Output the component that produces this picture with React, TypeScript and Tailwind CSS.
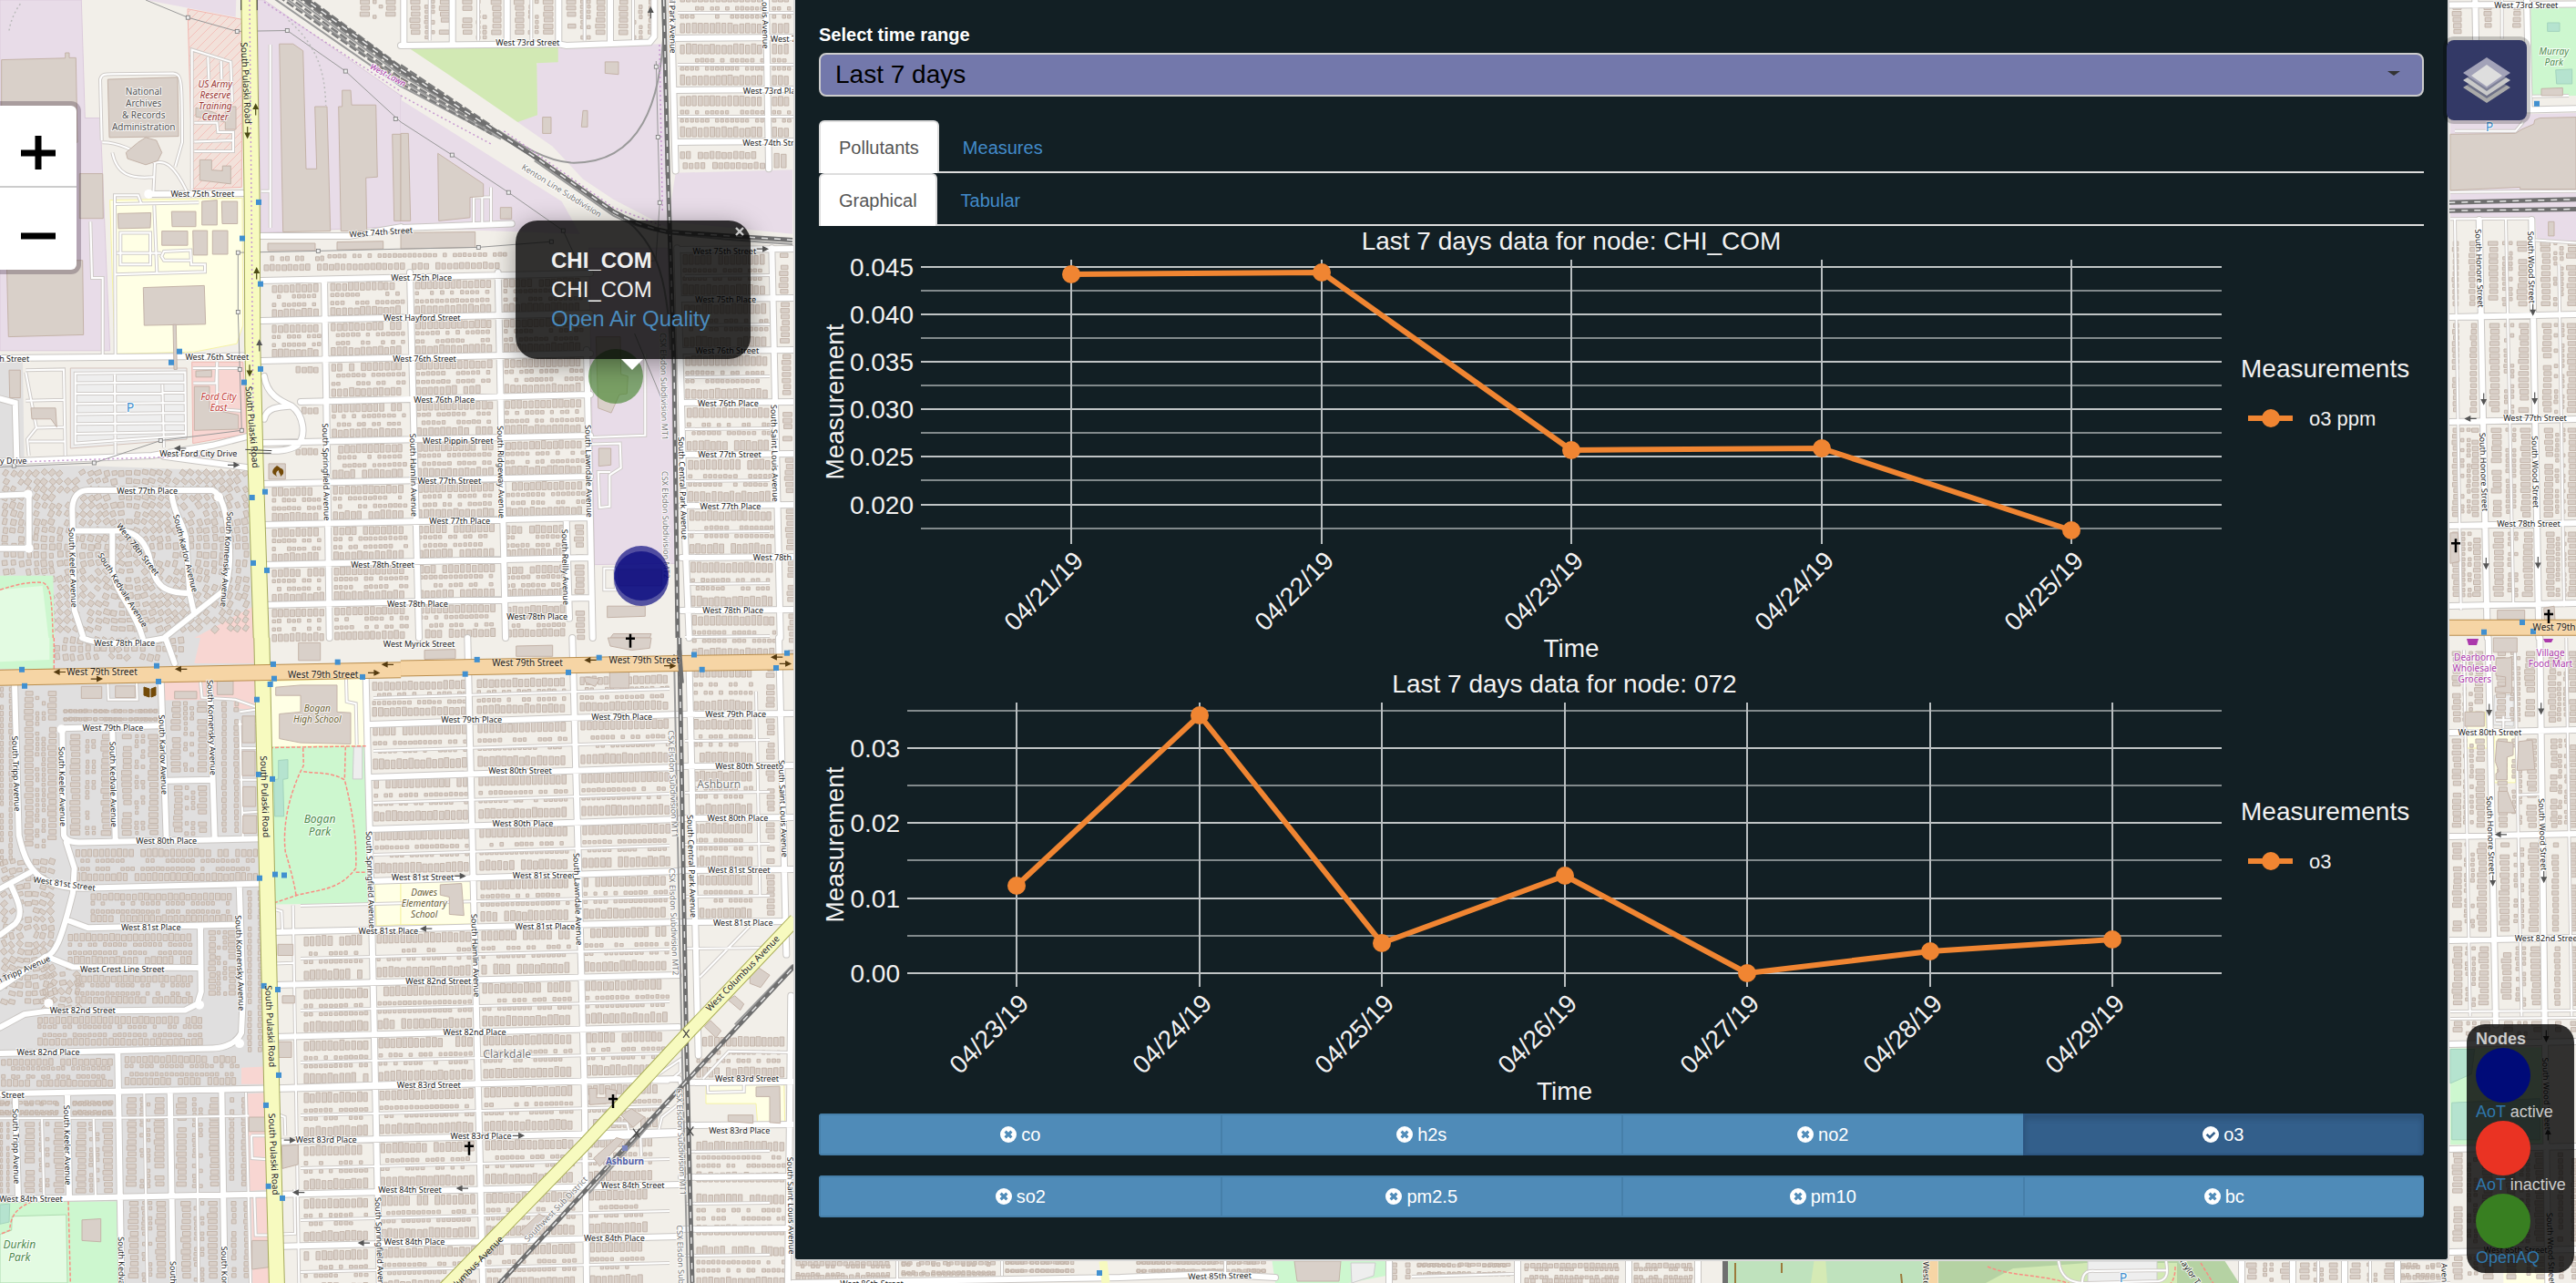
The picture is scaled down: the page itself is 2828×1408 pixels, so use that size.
import React, { useState } from "react";

/* ---------- map geometry helpers ---------- */

type Tile = { x: number; y: number; sx: number; sy: number };

// Map sheets: origin on the page and units per pixel on each axis.
const A: Tile = { x: 0, y: 0, sx: 3, sy: 2.24 };
const B: Tile = { x: 440, y: 0, sx: 3, sy: 2.24 };
const C: Tile = { x: 0, y: 700, sx: 3, sy: 2.215 };
const D: Tile = { x: 440, y: 700, sx: 3, sy: 2.215 };
const E: Tile = { x: 2380, y: 0, sx: 3, sy: 2.24 };
const F: Tile = { x: 2380, y: 700, sx: 3, sy: 2.215 };
const P: Tile = { x: 0, y: 0, sx: 1, sy: 1 };

const tx = (t: Tile, x: number) => Math.round((t.x + x / t.sx) * 10) / 10;
const ty = (t: Tile, y: number) => Math.round((t.y + y / t.sy) * 10) / 10;

const path = (t: Tile, d: string) =>
  d.replace(/(-?\d+),(-?\d+)/g, (_, x, y) => `${tx(t, +x)},${ty(t, +y)}`);

let seed = 7;
const rnd = () => {
  seed = (seed * 16807) % 2147483647;
  return seed / 2147483647;
};

const rect = (x: number, y: number, w: number, h: number) =>
  `M${x.toFixed(1)},${y.toFixed(1)}h${w.toFixed(1)}v${h.toFixed(1)}h${(-w).toFixed(1)}z`;

// A line of lots running west to east; slope follows the street grid.
function rowH(x0: number, x1: number, y: number, h: number, w: number, fill: number, slope: number) {
  let d = "";
  for (let x = x0; x + w <= x1; x += w + 1.5) {
    if (rnd() > fill) continue;
    const j = rnd() * h * 0.2;
    d += rect(x, y + (x - x0) * slope + j, w - rnd() * 0.8, h - j);
  }
  return d;
}

function rowV(x: number, y0: number, y1: number, w: number, h: number, fill: number) {
  let d = "";
  for (let y = y0; y + h <= y1; y += h + 1.6) {
    if (rnd() > fill) continue;
    const j = rnd() * w * 0.25;
    d += rect(x + j, y, w - j, h - rnd() * 0.8);
  }
  return d;
}

function blockH(x0: number, y0: number, x1: number, y1: number, slope = 0) {
  const H = y1 - y0;
  const big = Math.min(11, H * 0.25);
  const m = (y0 + y1) / 2;
  return (
    rowH(x0, x1, y0, big, 5, 0.96, slope) +
    rowH(x0, x1, m - 6.5, 4, 4, 0.75, slope) +
    rowH(x0, x1, m + 2.5, 4, 4, 0.75, slope) +
    rowH(x0, x1, y1 - big, big, 5, 0.97, slope)
  );
}

function blockV(x0: number, y0: number, x1: number, y1: number) {
  const W = x1 - x0;
  const big = Math.min(11, W * 0.27);
  const m = (x0 + x1) / 2;
  return (
    rowV(x0, y0, y1, big, 5, 0.95) +
    (W > 28 ? rowV(m - 5.5, y0, y1, 4, 4, 0.7) + rowV(m + 1.5, y0, y1, 4, 4, 0.7) : "") +
    rowV(x1 - big, y0, y1, big, 5, 0.95)
  );
}

function scatter(x0: number, y0: number, x1: number, y1: number) {
  let d = "";
  for (let y = y0; y < y1; y += 9)
    for (let x = x0; x < x1; x += 8.5) {
      if (rnd() < 0.12) continue;
      const cx = x + rnd() * 2;
      const cy = y + rnd() * 2;
      const a = Math.atan2(cy - (y0 + y1) / 2, cx - (x0 + x1) / 2);
      const w = 2 + rnd() * 1.1;
      const h = 2.6 + rnd();
      const c = Math.cos(a);
      const s = Math.sin(a);
      const pt = (u: number, v: number) => `${(cx + u * c - v * s).toFixed(1)},${(cy + u * s + v * c).toFixed(1)}`;
      d += `M${pt(-w, -h)}L${pt(w, -h)}L${pt(w, h)}L${pt(-w, h)}z`;
    }
  return d;
}

/* ---------- map data ---------- */

const areas: [Tile, string, string, string?][] = [
  [A, "M0,0L268,0L280,290L330,290L362,862L0,862z", "#e8dce8", "#dccbdc"],
  [A, "M480,0L778,0L776,42L660,25z", "#e8dce8"],
  [A, "M848,0L870,0L1320,235L1320,556L860,572z", "#e8dce8", "#dccbdc"],
  [B, "M0,245L530,495L590,575L0,560z", "#e8dce8"],
  [B, "M518,112L868,108L880,560L700,490L600,440L500,360L385,300L450,155z", "#e8dce8"],
  [B, "M905,425L1290,417L1290,575L880,545z", "#e8dce8"],
  [B, "M620,610L880,610L905,1385L638,1388z", "#e8dce8", "#dccbdc"],
  [B, "M20,115L518,112L518,153L448,155L450,283L385,300L170,190z", "#d2e9b4"],
  [A, "M618,22L798,48L796,460L635,465z", "#f2e1da", "#f3b6b0"],
  [A, "M362,492L798,487L800,800L780,845L640,865L378,870z", "#ffffe5", "#f6f3a5"],
  [A, "M632,890L800,890L812,1050L825,1065L635,1090z", "#f8d6d2", "#efb9b3"],
  [A, "M232,905L615,905L615,1080L232,1102z", "#eeeeee", "#d5c3bb"],
  [A, "M0,890L75,890L80,1145L300,1145L830,1160L850,1568L0,1568z", "#e0dfdf"],
  [C, "M0,0L850,0L900,1568L0,1568z", "#e0dfdf"],
  [C, "M660,0L850,0L850,62L640,62z", "#f8d6d2"],
  [A, "M835,1490L840,1568L640,1568z", "#f8d6d2"],
  [C, "M540,102L855,100L858,180L770,170L770,150L540,152z", "#f8d6d2"],
  [C, "M795,1045L872,1042L874,1085L795,1085z", "#f8d6d2"],
  [C, "M815,1108L885,1105L892,1340L822,1345z", "#f8d6d2"],
  [C, "M828,1357L890,1357L890,1568L832,1568z", "#f8d6d2"],
  [C, "M890,105L1205,98L1205,262L892,265z", "#ffffe5", "#f6f3a5"],
  [C, "M890,265L1205,262L1212,645L900,648z", "#cdf7cf"],
  [C, "M917,298L948,296L948,342L932,344L935,434L905,434L902,345L917,343z", "#b5e3cf", "#a3d3bd"],
  [C, "M1165,265L1193,265L1193,343L1162,343z", "#eeeeee", "#cccccc"],
  [C, "M1235,592L1320,590L1320,697L1240,700z", "#ffffe5", "#f6f3a5"],
  [D, "M0,590L232,588L232,696L0,697z", "#ffffe5", "#f6f3a5"],
  [D, "M1005,1085L1262,1082L1265,1185L1175,1183L1170,1132L1005,1132z", "#ffffe5", "#f6f3a5"],
  [E, "M1195,15L1344,15L1344,235L1197,237z", "#cdf7cf"],
  [E, "M1250,56L1290,56L1290,77L1250,77zM1277,172L1331,170L1331,206L1280,206z", "#b5e3cf", "#a3d3bd"],
  [E, "M930,285L1344,278L1344,600L1215,585L1210,540L930,540z", "#e8dce8"],
  [F, "M1075,237L1145,235L1145,352L1072,352z", "#ffffe5", "#f6f3a5"],
  [F, "M978,180L1045,180L1052,268L980,268z", "#ffffe5", "#f6f3a5"],
  [F, "M1075,140L1138,138L1138,215L1072,212z", "#eeeeee", "#cccccc"],
  [F, "M1105,1500L1245,1500L1245,1568L1105,1568z", "#ffffe5"],
];

// Parks sit above the lots so that their lawns stay clear.
const parks: [Tile, string, string, string?][] = [
  [A, "M0,1415L175,1415L180,1568L0,1568z", "#cdf7cf"],
  [C, "M0,0L178,0L178,75L0,75z", "#cdf7cf"],
  [A, "M0,1450L140,1440L160,1568L0,1568z", "#e3fbe2"],
  [C, "M0,0L163,0L163,53L0,58z", "#e3fbe2"],
  [C, "M0,1372L385,1370L390,1568L0,1568z", "#cdf7cf"],
  [C, "M40,1406L218,1402L222,1568L0,1568L0,1450L38,1440z", "#e3fbe2", "#aedcb0"],
  [C, "M0,1378L32,1376L30,1420L0,1425z", "#b5e3cf", "#a3d3bd"],
  [F, "M930,998L1240,995L1240,1230L930,1232z", "#cdf7cf"],
  [F, "M930,1000L1010,1000L1000,1060L930,1083zM935,1130L1225,1120L1225,1220L935,1220z", "#b5e3cf", "#a3d3bd"],
  [P, "M1396,1380L1522,1380L1522,1400L1480,1408L1400,1408z", "#cdf7cf"],
  [P, "M1483,1386L1510,1386L1508,1400L1484,1408z", "#eeeeee", "#cccccc"],
  [P, "M1896,1380L2112,1380L2112,1408L1896,1408z", "#bfe2bd"],
  [P, "M1992,1380L2004,1380L2006,1408L1988,1408z", "#d5eab5"],
  [P, "M2128,1380L2440,1380L2458,1408L2128,1408z", "#b5d2a3"],
  [P, "M2180,1408L2210,1392L2290,1386L2390,1386L2390,1408z", "#d2e9b4"],
  [P, "M2292,1384L2368,1384L2368,1412L2292,1415z", "#eeeeee", "#cccccc"],
];

const buildings: [Tile, string][] = [
  [A, "M5,147L215,143L215,130L228,130L228,142L250,142L255,350L5,350zM22,640L272,640L275,823L28,828zM262,427L338,427L340,537L262,537z"],
  [A, "M355,195L585,190L588,335L360,338zM415,375L455,350L480,338L515,345L533,375L520,395L480,405L420,390z"],
  [A, "M472,707L673,702L677,797L475,800zM388,525L497,523L495,560L390,562zM565,520L645,520L645,557L567,557zM665,495L715,492L715,553L665,553zM730,495L782,495L782,550L732,550zM533,568L618,568L618,603L533,603zM635,567L683,567L683,627L637,627zM700,567L750,567L750,625L700,625z"],
  [A, "M658,393L697,393L697,418L733,420L733,408L760,408L760,452L658,443zM645,265L700,275L742,290L745,262L777,262L777,318L742,318L742,300L645,287z"],
  [A, "M640,950L690,950L690,1005L785,1020L785,1055L640,1058zM645,912L697,910L697,927L645,927z"],
  [A, "M920,108L965,108L998,125L1008,415L1043,415L1037,262L1077,262L1088,568L932,570zM1127,222L1155,222L1158,258L1238,258L1243,435L1205,437L1208,568L1123,568L1115,262L1127,262zM1292,330L1320,330L1320,543L1298,543z"],
  [A, "M882,598L1038,598L1038,616L882,616zM1110,595L1262,593L1262,612L1110,614zM30,910L67,910L67,978L32,978zM102,1003L183,1003L187,1050L168,1030L105,1030zM885,1140L940,1140L940,1178L885,1178z"],
  [A, "M570,798L580,798L583,908L573,908z"],
  [B, "M0,328L25,328L32,543L0,543zM122,377L272,452L272,483L228,485L228,535L125,543zM467,288L495,288L495,328L467,328zM673,152L717,152L717,183L673,180zM328,510L365,510L365,538L328,538zM600,272L615,272L615,312L595,312z"],
  [B, "M0,572L245,570L245,608L0,612z"],
  [B, "M643,828L723,828L725,920L748,925L745,968L720,970L693,1015L650,1003zM652,1102L692,1102L692,1143L652,1146zM680,1490L805,1490L805,1515L680,1518zM715,1400L860,1400L860,1440L720,1440z"],
  [B, "M690,1568L700,1558L825,1558L820,1568z"],
  [C, "M908,120L990,115L1110,115L1110,180L1155,182L1155,258L990,255L920,245L920,185L990,180L990,140L908,140z"],
  [C, "M268,118L335,118L335,147L268,147zM380,117L445,117L445,145L380,145zM575,130L648,130L648,148L575,148zM715,105L768,105L768,138L715,138zM983,12L1055,12L1055,55L983,55z"],
  [C, "M798,190L840,190L840,255L798,255zM798,275L840,275L840,335L798,335zM800,362L842,362L842,410L800,410zM800,432L845,432L845,475L800,475z"],
  [C, "M915,745L965,745L965,772L915,772zM930,870L970,870L970,888L930,888zM915,982L960,982L960,1020L915,1020zM928,1235L982,1232L982,1280L930,1290zM820,1165L875,1165L875,1200L820,1200zM830,1465L885,1465L885,1530L830,1535z"],
  [C, "M270,1415L332,1412L332,1468L270,1465z"],
  [D, "M130,600L200,597L208,675L160,672L160,630L130,625z"],
  [D, "M682,0L825,0L820,25L760,30L690,20zM605,95L655,100L640,118L608,108zM688,82L752,82L752,122L688,122zM78,30L180,28L180,50L78,52zM380,20L500,18L500,45L380,45z"],
  [D, "M620,1095L645,1095L645,1118L675,1118L675,1095L710,1100L708,1130L622,1135zM725,1160L760,1145L803,1165L765,1190zM635,1265L710,1215L735,1220L655,1285zM390,1445L455,1400L480,1410L410,1455z"],
  [D, "M1170,1092L1248,1090L1250,1180L1215,1178L1215,1115L1170,1115zM1078,1160L1160,1160L1160,1180L1078,1175zM1150,815L1175,800L1215,820L1185,850L1150,840zM1078,880L1100,870L1130,890L1118,905zM1000,945L1020,930L1055,955L1038,972z"],
  [E, "M1208,295L1225,290L1344,288L1344,465L1160,465L1160,460L930,468L930,330L1145,328L1165,318L1205,305z"],
  [E, "M1230,218L1300,216L1300,235L1230,235zM1253,545L1272,545L1272,580L1253,580zM930,1310L955,1310L960,1380L930,1385zM1238,1495L1272,1490L1275,1525L1240,1525zM1085,1500L1175,1500L1175,1523L1085,1523z"],
  [F, "M1072,0L1150,0L1150,35L1072,35zM978,180L1042,180L1042,215L978,215zM1080,50L1133,48L1133,135L1078,132L1078,120L1112,118L1112,95L1080,92z"],
  [F, "M1083,250L1137,255L1137,285L1117,290L1117,345L1080,345L1080,330L1090,325L1078,300zM1155,252L1200,248L1208,320L1150,322zM1088,373L1118,373L1145,425L1088,425z"],
  [P, "M1421,1384L1472,1384L1470,1406L1424,1406z"],
];

function buildHouses() {
  let d = "";
  // Grid between 75th Place and Myrick Street
  const rows = [308, 352, 396, 441, 486, 531, 576, 620, 664, 708];
  for (let i = 0; i < rows.length - 1; i++) {
    const s = (rows[i] - 300) * 0.0128;
    const cols = [293, 357 + s, 450 + s, 547 + s, 645 + s];
    for (let c = 0; c < 4; c++) {
      if (c === 0 && (i === 2 || i === 3 || i === 4)) {
        d += rowH(325, cols[1] - 4, rows[i] + 6, 7, 5, 0.9, 0);
        continue;
      }
      if (c === 3 && i > 5) {
        d += blockH(cols[c] + 5, rows[i] + 1, cols[c + 1] - 26, rows[i + 1] - 9, -0.02);
        d += rowV(cols[c + 1] - 18, rows[i], rows[i + 1] - 3, 10, 5, 0.9);
        continue;
      }
      d += blockH(cols[c] + 6, rows[i] + 4 - c * 2, cols[c + 1] - 5, rows[i + 1] - 4 - c * 2, -0.02);
    }
  }
  d += rowH(297, 360, 281, 5, 4, 0.8, 0) + rowH(290, 550, 290, 7, 5, 0.95, -0.01);
  d += rowH(360, 560, 279, 4, 4, 0.8, -0.01);
  // Blocks north of 73rd Street
  for (let i = 0; i < 5; i++) d += blockV(450 + i * 57, 0, 493 + i * 57, 44);
  d += blockV(395, 0, 434, 22);
  // Between the railway and the panel
  const east = [-15, 42, 99, 156, 190];
  for (let i = 0; i < 3; i++) {
    d += blockH(747, east[i] + 6, 839, east[i + 1] - 6);
    d += blockH(848, east[i] + 6, 872, east[i + 1] - 6);
  }
  d += rowH(747, 842, 166, 8, 5, 0.9, 0) + rowH(750, 842, 178, 7, 5, 0.95, 0) + rowH(850, 872, 166, 18, 6, 0.9, 0);
  const east2 = [274, 328, 385, 442, 499, 555, 612, 670, 727, 784, 841, 898, 955, 1012];
  for (let i = 0; i < east2.length - 1; i++) {
    const s = (east2[i] - 274) * 0.026;
    if (east2[i] > 700) d += blockH(762, east2[i] + 5, 828, east2[i + 1] - 5) + rowV(841, east2[i] + 5, east2[i + 1] - 5, 9, 5, 0.9);
    else {
      d += blockH(750 + s, east2[i] + 5, 845 + s, east2[i + 1] - 5);
      d += rowV(855 + s, east2[i] + 4, east2[i + 1] - 4, 10, 5, 0.9);
    }
  }
  [1131, 1246, 1304, 1361].forEach((y) => (d += blockH(765, y + 6, 866, y + 51)));
  // Grid south of 79th Street
  const south = [740, 788, 846, 903, 960, 1016, 1074, 1131, 1188, 1246, 1304, 1361, 1418];
  for (let i = 0; i < south.length - 1; i++) {
    const y = south[i];
    const s = (y - 740) * 0.018;
    const cols = [328, 403 + s, 518 + s, 631 + s, 741];
    for (let c = 0; c < 4; c++) {
      const off = (2 - c) * 3;
      if (c === 0 && y < 1000) continue;
      if (c === 1 && y === 960) continue;
      const right = c === 3 && y > 1100 ? Math.max(cols[3] + 10, 741 - (y - 1100) * 0.1) : cols[c + 1];
      d += blockH(cols[c] + 6, y + 5 + off, right - 5, south[i + 1] - 5 + off, -0.02);
    }
  }
  // Curved streets west of Pulaski
  d += scatter(5, 518, 275, 690) + scatter(62, 702, 200, 722);
  d += scatter(4, 945, 60, 1100) + scatter(50, 1060, 90, 1110);
  const cb = (x0: number, y0: number, x1: number, y1: number, v = true) =>
    (d += (v ? blockV : blockH)(tx(C, x0), ty(C, y0), tx(C, x1), ty(C, y1)));
  cb(0, 120, 40, 560);
  cb(80, 130, 185, 520);
  cb(230, 235, 365, 488);
  cb(400, 235, 520, 488);
  cb(562, 155, 680, 335);
  cb(570, 360, 680, 485);
  cb(730, 155, 785, 485);
  cb(210, 175, 520, 200, false);
  cb(250, 512, 855, 590, false);
  cb(300, 620, 770, 690, false);
  cb(225, 718, 640, 792, false);
  cb(250, 820, 640, 888, false);
  cb(685, 712, 775, 880);
  cb(815, 615, 862, 1020);
  cb(125, 920, 680, 990, false);
  cb(5, 1022, 372, 1090, false);
  cb(412, 1015, 790, 1086, false);
  cb(0, 1125, 205, 1160, false);
  cb(240, 1125, 372, 1160, false);
  cb(0, 1178, 30, 1350);
  cb(80, 1178, 210, 1350);
  cb(250, 1178, 370, 1350);
  cb(415, 1118, 540, 1345);
  cb(580, 1118, 720, 1345);
  cb(755, 1118, 810, 1345);
  cb(422, 1370, 545, 1568);
  cb(595, 1370, 715, 1568);
  cb(762, 1370, 818, 1568);
  // Strip east of the panel
  const st = [[262, 343], [352, 458], [467, 572], [581, 661], [712, 798], [808, 912], [922, 1027], [1036, 1110], [1118, 1140], [1262, 1368], [1376, 1408]];
  st.forEach(([a, b]) => {
    const s = Math.min(20, (a - 262) * 0.019);
    d += blockV(2692, a + 3, 2717 + s, b - 3) + blockV(2731 + s, a + 3, 2774 + s, b - 3) + blockV(2789 + s, a + 3, 2828, b - 3);
  });
  d += rowV(2692, 6, 40, 10, 5, 0.9) + rowV(2726, 6, 33, 9, 5, 0.9) + rowV(2758, 6, 33, 9, 5, 0.9);
  // Strip south of the panel
  d += blockH(874, 1384, 978, 1404) + blockH(990, 1384, 1095, 1400) + blockH(1104, 1384, 1180, 1396) + blockH(1248, 1384, 1390, 1396);
  d += blockV(1528, 1386, 1548, 1408) + blockH(1556, 1386, 1660, 1400) + blockH(1674, 1386, 1780, 1408) + blockH(1794, 1386, 1860, 1408);
  d += blockV(2466, 1386, 2514, 1408) + blockV(2524, 1386, 2566, 1408) + blockV(2580, 1386, 2628, 1408) + blockH(2636, 1386, 2680, 1404);
  return d;
}
const houses = buildHouses();

function buildRoads() {
  const wide: string[] = [];
  const thin: string[] = [];
  [308, 352, 396, 441, 486, 531, 576, 620, 664].forEach((y, i) => wide.push(`M${i === 3 ? 330 : 287},${y}L648,${y - 8}`));
  [788, 846, 903, 960, 1016, 1074, 1131, 1188, 1246, 1304, 1361, 1418].forEach((y) => {
    wide.push(`M${y < 1000 ? 406 : 300},${y + 7}L745,${y - 4}`);
    thin.push(`M${y < 1000 ? 410 : 330},${y - 22}L735,${y - 32}`);
  });
  [42, 99, 156].forEach((y) => wide.push(`M742,${y}L872,${y - 1}`));
  [14, 71, 128].forEach((y) => thin.push(`M744,${y}L872,${y}`));
  [274, 328, 385, 442, 499, 555, 612, 670, 784, 841, 898, 955, 1012, 1188, 1235, 1292, 1349].forEach((y) => {
    wide.push(`M748,${y}L872,${y - 1}`);
    if (y !== 1188) thin.push(`M752,${y + 29}L845,${y + 28}`);
  });
  [347, 462, 576, 664, 803, 917, 1031, 1145, 1260, 1373].forEach((y) => wide.push(`M2690,${y + 1}L2828,${y - 2}`));
  [1110, 1118].forEach((y) => thin.push(`M2690,${y}L2828,${y - 1}`));
  const w = (t: Tile, d: string) => wide.push(path(t, d));
  const n = (t: Tile, d: string) => thin.push(path(t, d));
  w(A, "M860,580L1150,580L1320,558");
  w(B, "M0,560L365,550");
  w(A, "M490,477L800,475");
  w(A, "M0,880L800,875");
  w(A, "M0,1135L500,1120L700,1095L830,1070");
  w(A, "M540,1122L840,1152");
  w(A, "M870,925C880,970 920,985 960,998C1000,1020 1010,1070 980,1095C940,1112 900,1108 870,1108");
  w(A, "M870,1030C880,1000 920,1000 960,998");
  w(A, "M1068,690L1075,990L1085,1568");
  w(B, "M30,670L60,1568");
  w(B, "M320,670L345,1568");
  w(B, "M612,860L632,1568");
  w(B, "M545,1280L555,1520");
  w(B, "M890,0L905,420");
  w(B, "M1203,0L1212,415");
  w(B, "M910,610L935,1300L950,1568");
  w(B, "M1222,610L1250,1568");
  w(B, "M0,112L520,108L545,112L820,104L835,90L835,0");
  [10, 170, 350, 520, 690].forEach((x) => w(B, `M${x},0L${x},105`));
  [95, 255, 430, 605, 765].forEach((x) => n(B, `M${x},0L${x},100`));
  w(C, "M1205,100L1225,700L1250,1568");
  w(D, "M220,0L270,1568");
  w(D, "M565,0L605,1100L612,1568");
  w(D, "M950,80L980,1015");
  w(D, "M1245,0L1270,770");
  w(D, "M1285,870L1275,1568");
  n(D, "M985,825L1150,700");
  n(D, "M995,1072L1080,1005L1290,1008");
  n(D, "M1170,130L1183,625");
  w(A, "M0,980L50,990L55,1125");
  w(A, "M0,1218L95,1215L95,1348L0,1348");
  w(A, "M275,1568L245,1500L238,1250C240,1220 260,1205 290,1205L700,1205C730,1215 745,1260 750,1300C760,1360 760,1400 740,1450L540,1568");
  w(A, "M240,1305L400,1305C460,1310 485,1340 495,1380C510,1440 540,1458 625,1458");
  w(A, "M370,1310L370,1400C380,1460 440,1490 470,1568");
  w(A, "M565,1210C570,1260 600,1280 612,1320L625,1460L640,1510");
  w(C, "M270,0C330,20 460,15 545,0L575,62");
  w(C, "M48,110L62,480C80,540 100,560 130,580C180,605 230,610 300,608L870,597");
  w(C, "M205,222L210,480C215,492 230,497 260,497L865,488");
  w(C, "M205,220L525,213");
  w(C, "M530,105L548,490");
  w(C, "M370,225L380,492");
  w(C, "M690,105L707,487");
  w(C, "M550,347L700,345");
  w(C, "M218,497L245,560L240,620C200,740 180,770 150,775L0,850");
  w(C, "M218,685L290,705L780,697");
  w(C, "M155,775L240,800L655,802");
  w(C, "M660,705L662,860L650,890L610,905L150,908L80,915L0,947");
  w(C, "M788,600L800,880L795,960C780,985 740,997 700,998L0,1010");
  w(C, "M0,610L100,570M35,600C60,640 80,670 50,695L0,722");
  w(C, "M0,1108L890,1095L1320,1085");
  w(C, "M0,1365L900,1352");
  w(C, "M50,1112L60,1360M222,1112L228,1360");
  w(C, "M388,1010L400,1568");
  w(C, "M560,1100L570,1568");
  w(C, "M730,1100L740,1568");
  n(C, "M0,1168L470,1166L820,1162M138,1168L145,1360M308,1168L315,1358M475,1105L485,1568M648,1165L655,1568M810,1105L825,1568");
  n(C, "M790,180L860,172M785,210L858,208M788,268L858,268M790,345L865,345M795,425L862,422M790,200L800,485");
  n(C, "M965,650L985,1568");
  n(C, "M355,108L357,150L452,150L450,108M660,105L665,145L775,150L860,172");
  n(A, "M335,345L330,195C335,182 345,182 370,182L570,180C600,182 600,200 600,350L577,410M337,350C400,350 450,375 510,400L505,478M510,400C540,395 570,400 615,470");
  n(A, "M370,375C385,430 430,440 505,435");
  n(A, "M380,875L378,480L455,480L465,500M380,502L655,498M508,505L517,670M380,675L675,668L675,650L630,650L628,615L540,618L532,630L540,640L628,640M385,622L530,622M397,572L495,572L495,650L397,650z");
  n(A, "M632,465L632,122L760,152L765,250M685,140L688,195M728,150L730,195M640,302L715,302L718,325L768,325L768,372L640,372M640,348L768,345");
  n(A, "M298,545L303,683L338,683L338,875M890,110L890,560M860,470L888,470");
  n(A, "M85,910L210,908L215,1120M85,985L210,983M85,915L120,1052L90,1080L95,1120M120,1052L210,1050M95,1085L212,1085");
  n(A, "M635,905L790,905M637,942L712,942L715,890L715,1005L795,1010");
  n(A, "M248,918L610,915L612,1070L248,1090zM250,942L610,940M250,968L610,965M250,993L612,990M250,1018L612,1015M250,1042L612,1040M250,1066L612,1062M378,920L380,1120M535,945L540,1100");
  n(B, "M240,550L240,485L297,485L297,460M268,485L268,548M297,485L297,548");
  n(B, "M630,1075L805,1070L805,870M630,1092L722,1090L725,1150L688,1168L688,1245L655,1248L650,1160L690,1160M670,1397L705,1397L708,1450L670,1450z");
  n(C, "M1140,100L1142,155L1172,160L1175,260M905,660L928,665L930,710M905,792L965,790M920,1160L938,1165L940,1210M828,1210L885,1210M828,1210L830,1265L890,1268M925,1450L972,1448L970,1340M838,1357L842,1452L900,1452");
  n(D, "M820,1075L920,1025L920,1055L880,1080L830,1080M700,1180L745,1180L755,1210M850,1195L860,1165L920,1130M790,1215L792,1260M1010,1080L1012,1105L1130,1103L1130,1080");
  w(D, "M610,1215L920,1205");
  w(E, "M1025,540L1052,1568");
  w(E, "M1198,540L1222,1568");
  w(F, "M1055,0L1080,940");
  w(F, "M1225,0L1252,1568");
  w(E, "M930,12L1344,10");
  w(E, "M1012,0L1014,95");
  w(E, "M1182,0L1190,270L1344,267");
  n(E, "M1100,0L1100,95M945,322L1145,322L1170,300M1200,237L1320,235M1210,590L1344,597M930,472L1344,470M945,540L965,1500M1113,540L1138,1490M1288,650L1305,1490M930,538L1198,537");
  n(F, "M975,30L995,920M1143,30L1165,920M1312,0L1330,920M1150,382L1225,380M1105,190L1105,220M1080,200L1130,200");
  w(P, "M870,1408L1230,1402L1330,1398L1400,1402");
  n(P, "M985,1384L985,1404M1100,1384L1100,1400M1345,1384L1345,1400M1550,1401L1662,1398");
  w(P, "M1525,1384L1525,1408M1666,1384L1666,1408M1788,1384L1788,1408M1864,1384L1864,1408M2461,1384L2461,1408M2517,1384L2517,1408M2574,1384L2574,1408M2632,1384L2632,1408");
  n(P, "M2545,1384L2545,1408M2602,1384L2602,1408M2260,1384C2262,1400 2270,1408 2290,1408L2370,1406C2380,1404 2380,1396 2378,1384M2286,1408C2286,1398 2290,1394 2300,1395L2378,1394M2630,1410L2690,1408");
  return { wide: wide.join(""), thin: thin.join("") };
}
const roads = buildRoads();

const pulaski = path(A, "M820,-10L830,500L832,850L842,1150L860,1568") + path(C, "M862,0L880,600L895,1100L912,1580");
const columbus = path(D, "M145,1580L600,1235L940,965L1300,685");
const street79 = path(C, "M-10,97L1320,78") + path(D, "M0,74L920,62L1300,58") + path(E, "M925,1543L1350,1543");
const rails = [
  path(B, "M866,0L880,430L900,900L912,1568") + path(D, "M917,0L940,960L960,1568"),
  path(D, "M300,1590L600,1350L950,1070L1300,795"),
  path(A, "M990,-10L1320,170") + path(B, "M0,170L440,385L700,520C760,545 820,562 880,570L1290,590"),
  path(E, "M925,498L1350,490M925,518L1350,514"),
];
const sideRails = [
  path(A, "M930,-10L1320,198") + path(B, "M0,198L330,337L440,388"),
  path(A, "M960,-10L1320,184") + path(B, "M0,184L330,330L440,386"),
  path(A, "M890,-10L1320,212") + path(B, "M0,212L200,290L330,342"),
  path(B, "M440,395L700,530C800,570 900,582 1290,600"),
  path(B, "M866,60C860,250 790,405 560,400C480,395 400,360 320,320"),
  path(B, "M700,520C840,580 880,680 888,860"),
  path(D, "M620,1350L860,1150M1100,940L1290,795"),
  path(B, "M862,0L875,430"),
  path(D, "M900,40L925,960L945,1568"),
];
const yardTracks = path(A, "M915,-10L1320,200M945,-10L1320,192M975,-10L1320,178M1005,-10L1320,164") + path(B, "M0,205L300,330M0,192L300,322M0,178L300,316M0,160L300,310");

const stops: [Tile, number, number][] = [
  [A, 852, 497], [A, 798, 586], [A, 858, 698], [A, 591, 864], [A, 564, 891], [A, 858, 907], [A, 804, 940], [A, 873, 1209], [A, 830, 1223], [A, 834, 1384], [A, 879, 1402],
  [C, 72, 77], [C, 81, 117], [C, 516, 68], [C, 522, 106], [C, 900, 64], [C, 1112, 59], [C, 890, 113], [C, 903, 99], [C, 1194, 95], [C, 846, 150], [C, 852, 332], [C, 897, 343], [C, 855, 584], [C, 906, 575], [C, 936, 577], [C, 869, 846], [C, 915, 855], [C, 918, 1063], [C, 876, 1136], [C, 884, 1333], [C, 930, 1362],
  [D, 251, 53], [D, 212, 88], [D, 552, 84], [D, 653, 48], [D, 966, 41], [D, 992, 77], [D, 1236, 73], [D, 1272, 37],
  [E, 1215, 255], [E, 1167, 1530], [E, 1041, 1554], [E, 1203, 1552],
  [P, 1207, 1397],
];

const towers: [Tile, number, number][] = [
  [A, 619, 43], [A, 781, 77], [A, 946, 75], [A, 1138, 175], [A, 1303, 292], [B, 169, 381], [B, 355, 473], [B, 535, 567], [B, 496, 594], [B, 256, 608], [A, 1048, 617], [A, 784, 621], [A, 784, 767], [A, 790, 908], [A, 796, 1058], [A, 529, 1083], [A, 310, 1138], [A, 46, 1145], [B, 841, 164], [B, 847, 337], [B, 853, 498],
];

const turnarounds: [Tile, number, number][] = [
  [A, 92, 1215], [A, 95, 1348], [A, 720, 1222], [A, 490, 477], [C, 203, 222], [C, 160, 888], [C, 657, 892], [C, 789, 986],
];

type Label = [Tile, string, number, number, number?, ("street" | "rail" | "road")?];
const labels: Label[] = [
  [A, "West 75th Street", 667, 476], [A, "West 74th Street", 1255, 570, -4], [A, "West 76th Street", 715, 876], [A, "West 76th Street", -8, 882],
  [A, "West Ford City Drive", 653, 1115], [A, "West Ford City Drive", -40, 1132], [A, "West 77th Place", 485, 1206], [A, "West 78th Street", 455, 1350, 52],
  [A, "South Keeler Avenue", 241, 1395, 88], [A, "South Kedvale Avenue", 405, 1450, 58], [A, "South Karlov Avenue", 612, 1360, 76], [A, "South Komensky Avenue", 748, 1375, 94],
  [A, "South Springfield Avenue", 1075, 1160, 89], [A, "West 78th Street", 1260, 1388],
  [A, "South Pulaski Road", 812, 204, 87, "road"], [A, "South Pulaski Road", 832, 1050, 85, "road"],
  [B, "West 73rd Street", 418, 104], [B, "West 75th Place", 68, 682], [B, "West Hayford Street", 70, 781], [B, "West 76th Street", 78, 882], [B, "West 76th Place", 143, 982], [B, "West Pippin Street", 188, 1082],
  [B, "West 77th Street", 160, 1182], [B, "West 77th Place", 194, 1280], [B, "West 78th Place", 55, 1484], [B, "West 78th Place", 449, 1515],
  [B, "South Hamlin Avenue", 43, 1168, 89], [B, "South Ridgeway Avenue", 331, 1160, 89], [B, "South Lawndale Avenue", 620, 1158, 89], [B, "South Reilly Avenue", 543, 1394, 89],
  [B, "South Central Park Avenue", 895, 5, 89], [B, "South Saint Louis Avenue", 1200, 0, 89], [B, "South Central Park Avenue", 930, 1200, 88], [B, "South Saint Louis Avenue", 1232, 1114, 89],
  [B, "West 73rd Street", 1322, 94], [B, "West 73rd Place", 1228, 222], [B, "West 74th Street", 1230, 351], [B, "West 75th Street", 1066, 616], [B, "West 75th Place", 1070, 735], [B, "West 76th Street", 1075, 862], [B, "West 76th Place", 1078, 990], [B, "West 77th Street", 1083, 1117], [B, "West 77th Place", 1086, 1244], [B, "West 78th Street", 1265, 1370], [B, "West 78th Place", 1094, 1500],
  [B, "CSX Elsdon Subdivision MT1", 868, 950, 89, "rail"], [B, "CSX Elsdon Subdivision MT2", 874, 1290, 89, "rail"], [B, "Kenton Line Subdivision", 530, 468, 32, "rail"],
  [C, "West 78th Place", 410, 13], [C, "West 79th Place", 372, 218], [C, "West 80th Place", 548, 493], [C, "West 81st Street", 212, 597, 8], [C, "West 81st Place", 497, 704], [C, "West Crest Line Street", 403, 805], [C, "West 82nd Street", 272, 905], [C, "West 82nd Place", 159, 1007], [C, "West 83rd Street", -25, 1110], [C, "West 83rd Place", 1074, 1219], [C, "West 84th Street", 102, 1363], [C, "South Tripp Avenue", 54, 330, 88], [C, "South Keeler Avenue", 206, 361, 89], [C, "South Kedvale Avenue", 374, 356, 89], [C, "South Karlov Avenue", 538, 284, 88], [C, "South Komensky Avenue", 698, 218, 88],
  [C, "South Komensky Avenue", 791, 790, 88], [C, "South Tripp Avenue", 50, 815, -24], [C, "South Springfield Avenue", 1221, 588, 88], [C, "South Tripp Avenue", 54, 1236, 89], [C, "South Keeler Avenue", 223, 1233, 89], [C, "South Kedvale Avenue", 402, 1560, 89], [C, "South Karlov Avenue", 573, 1612, 89], [C, "South Komensky Avenue", 742, 1595, 89], [C, "South Springfield Avenue", 1251, 1478, 88],
  [C, "South Pulaski Road", 874, 386, 88, "road"], [C, "South Pulaski Road", 892, 944, 87, "road"], [C, "South Pulaski Road", 903, 1255, 87, "road"],
  [C, "West 79th Street", 336, 82, 0, "road"], [C, "West 79th Street", 1064, 88, 0, "road"], [C, "West 81st Place", 1279, 711], [D, "West 79th Street", 417, 60, 0, "road"], [D, "West 79th Street", 802, 54, 0, "road"],
  [D, "West Myrick Street", 60, 15], [D, "West 79th Place", 233, 199], [D, "West 79th Place", 728, 191], [D, "West 80th Street", 393, 323], [D, "West 80th Place", 402, 450], [D, "West 81st Street", 72, 581], [D, "West 81st Street", 471, 576], [D, "West 81st Place", 475, 701], [D, "West 82nd Street", 124, 834], [D, "West 82nd Place", 243, 958], [D, "West 83rd Street", 92, 1086], [D, "West 83rd Place", 264, 1211], [D, "West 84th Street", 30, 1340], [D, "West 84th Place", 45, 1468], [D, "West 84th Street", 764, 1330], [D, "West 84th Place", 703, 1458],
  [D, "South Hamlin Avenue", 247, 772, 88], [D, "South Lawndale Avenue", 584, 635, 88], [D, "South Central Park Avenue", 959, 555, 88], [D, "South Saint Louis Avenue", 1260, 415, 88], [D, "South Saint Louis Avenue", 1286, 1380, 89],
  [D, "West 79th Place", 1103, 185], [D, "West 80th Street", 1140, 311], [D, "West 80th Place", 1110, 438], [D, "West 81st Street", 1114, 564], [D, "West 81st Place", 1127, 691], [D, "West 83rd Street", 1140, 1071], [D, "West 83rd Place", 1115, 1198],
  [D, "West Columbus Avenue", 1125, 815, -46, "road"], [D, "West Columbus Avenue", 215, 1545, -46, "road"], [D, "Southwest Sub District", 510, 1388, -46, "rail"],
  [D, "CSX Elsdon Subdivision MT1", 897, 355, 88, "rail"], [D, "CSX Elsdon Subdivision MT2", 900, 690, 88, "rail"], [D, "CSX Elsdon Subdivision MT1", 924, 1225, 88, "rail"], [D, "CSX Elsdon Subdivision", 924, 1535, 88, "rail"],
  [E, "West 73rd Street", 1180, 12], [E, "West 77th Street", 1209, 1027], [E, "West 78th Street", 1188, 1287], [E, "West 79th Street", 1318, 1541, 0, "road"], [E, "South Honore Street", 1027, 660, 88], [E, "South Wood Street", 1198, 657, 89], [E, "South Honore Street", 1041, 1160, 88], [E, "South Wood Street", 1211, 1160, 89],
  [F, "West 80th Street", 1060, 229], [F, "West 82nd Street", 1250, 729], [F, "South Honore Street", 1064, 480, 88], [F, "South Wood Street", 1235, 478, 88], [F, "South Wood Street", 1248, 1108, 88], [F, "South Wood Street", 1262, 1485, 88], [F, "West 85th Street", 1145, 1487],
  [P, "West 85th Street", 1339, 1400, -1], [P, "West 86th Street", 957, 1408], [P, "Avenue", 2684, 1402, 89], [P, "Western", 2115, 1402, 89], [P, "Taylor Trail", 2408, 1400, 55],
];

// Multi-line names: sheet, lines, centre x, centre y, line step, colour, italic
const notes: [Tile, string[], number, number, number, string, boolean?][] = [
  [A, ["National", "Archives", "& Records", "Administration"], 473, 267, 13, "#555555"],
  [A, ["US Army", "Reserve", "Training", "Center"], 709, 247, 12, "#9a3331", true],
  [A, ["Ford City", "East"], 720, 988, 12, "#c43a36", true],
  [C, ["Bogan", "High School"], 1045, 183, 12, "#6b6030", true],
  [C, ["Bogan", "Park"], 1053, 455, 14, "#4c8a4c", true],
  [C, ["Durkin", "Park"], 64, 1490, 14, "#4c8a4c", true],
  [D, ["Dawes", "Elementary", "School"], 77, 644, 12, "#6b6030", true],
  [D, ["Ashburn"], 1048, 356, 14, "#777777"],
  [D, ["Clarkdale"], 350, 1010, 14, "#777777"],
  [E, ["Murray", "Park"], 1271, 138, 12, "#4c8a4c", true],
  [F, ["Dearborn", "Wholesale", "Grocers"], 1010, 74, 12, "#ac39ac"],
  [F, ["Village", "Food Mart"], 1260, 48, 12, "#ac39ac"],
];

const arrows: [Tile, number, number, number, string][] = [
  [A, 842, 270, -90, "#4b4b15"], [A, 815, 325, 90, "#4b4b15"], [A, 845, 673, -90, "#4b4b15"], [A, 854, 850, -90, "#555"], [A, 822, 910, 90, "#4b4b15"], [A, 595, 1102, 180, "#555"], [A, 768, 1143, 0, "#555"],
  [C, 198, 83, 180, "#553b10"], [C, 317, 100, 0, "#553b10"], [C, 598, 76, 180, "#553b10"], [C, 1230, 85, 0, "#553b10"], [C, 1278, 65, 180, "#553b10"], [C, 953, 1221, 0, "#555"], [C, 985, 1348, 180, "#555"], [C, 1200, 1471, 180, "#555"],
  [D, 193, 579, 0, "#555"], [D, 85, 707, 180, "#555"], [D, 386, 1210, 0, "#555"], [D, 204, 1338, 180, "#555"], [D, 626, 54, 180, "#553b10"], [D, 885, 68, 0, "#553b10"], [D, 1240, 47, 180, "#553b10"], [D, 1265, 63, 0, "#553b10"],
  [B, 823, 32, -90, "#555"], [B, 1190, 612, 0, "#555"], [E, 1202, 760, 90, "#555"], [E, 1040, 980, 90, "#555"], [E, 1208, 978, 90, "#555"], [E, 998, 1029, 180, "#555"], [E, 1048, 1384, 90, "#555"], [E, 1219, 1382, 90, "#555"],
  [F, 1058, 174, 90, "#555"], [F, 1229, 171, 90, "#555"], [F, 1098, 478, 180, "#555"], [F, 1070, 588, 90, "#555"], [F, 1238, 580, 90, "#555"], [F, 1246, 967, 90, "#333"], [F, 1252, 1208, -90, "#333"],
];

const crosses: [Tile, number, number][] = [[D, 756, 6], [D, 699, 1125], [D, 225, 1240], [E, 948, 1340], [E, 1254, 1514]];

function StreetMap() {
  return (
    <svg
      className="absolute inset-0 h-full w-full"
      viewBox="0 0 2828 1408"
      preserveAspectRatio="xMidYMid slice"
      fontFamily="'Noto Sans', sans-serif"
      role="img"
      aria-label="Street map"
    >
      <defs>
        <pattern id="hatch" width="10" height="10" patternUnits="userSpaceOnUse">
          <path d="M0,10L10,0" stroke="#f3c0ba" strokeWidth="1" />
        </pattern>
      </defs>
      <rect width="2828" height="1408" fill="#f2efe9" />
      {areas.map(([t, d, fill, stroke], i) => (
        <path key={i} d={path(t, d)} fill={fill} stroke={stroke ?? "none"} />
      ))}
      <path d={path(A, "M618,22L798,48L796,460L635,465z")} fill="url(#hatch)" />
      <path d={houses} fill="#d9d0c9" stroke="#c4b6ab" strokeWidth="1" />
      {parks.map(([t, d, fill, stroke], i) => (
        <path key={i} d={path(t, d)} fill={fill} stroke={stroke ?? "none"} />
      ))}
      <path d={roads.thin} fill="none" stroke="#cfcbc8" strokeWidth="4" />
      <path d={roads.wide} fill="none" stroke="#c9c6c3" strokeWidth="8" strokeLinecap="round" />
      <path d={roads.thin} fill="none" stroke="#ffffff" strokeWidth="2" />
      <path d={roads.wide} fill="none" stroke="#ffffff" strokeWidth="6" strokeLinecap="round" />
      {buildings.map(([t, d], i) => (
        <path key={i} d={path(t, d)} fill="#d9d0c9" stroke="#c4b3a8" />
      ))}
      {turnarounds.map(([t, x, y], i) => (
        <circle key={i} cx={tx(t, x)} cy={ty(t, y)} r="5" fill="#fff" />
      ))}
      {/* park paths */}
      <path
        d={
          path(C, "M888,267L1205,263M998,268L1000,310C950,380 930,460 940,520C960,570 970,600 975,625M1000,325C1040,330 1090,325 1135,345C1165,430 1175,500 1172,560C1120,610 1070,610 980,625L900,645M1172,570L1212,570M1138,265L1135,345M178,0L178,75M225,1370L232,1568M105,1370C60,1385 35,1400 32,1440L0,1450") +
          path(A, "M0,1450C60,1435 100,1430 140,1432C170,1440 170,1480 175,1568") +
          path(P, "M2182,1390C2210,1402 2250,1398 2280,1412M2388,1390C2388,1400 2386,1406 2380,1412M2416,1386L2432,1412")
        }
        fill="none"
        stroke="#fa8d83"
        strokeWidth="1.5"
        strokeDasharray="4 2"
      />
      {/* power lines */}
      <path
        d={
          path(A, "M480,0L619,43L781,77L946,75L1138,175L1320,300M784,621L784,767L790,908L796,1058L529,1083L310,1138L0,1148M784,621L1048,617L1320,612") +
          path(B, "M0,300L169,381L355,473L535,567L580,640M0,612L256,608L496,594M841,150L847,337L853,498L840,640L760,650M770,820L870,1000")
        }
        fill="none"
        stroke="#999"
        strokeWidth="1"
      />
      {towers.map(([t, x, y], i) => (
        <rect key={i} x={tx(t, x) - 2} y={ty(t, y) - 2} width="4" height="4" fill="#eee" stroke="#777" strokeWidth="0.8" />
      ))}
      {/* rail */}
      {sideRails.map((d, i) => (
        <path key={i} d={d} fill="none" stroke="#9a9a9a" strokeWidth="2" />
      ))}
      <path d={yardTracks} fill="none" stroke="#7d7d7d" strokeWidth="2.5" strokeDasharray="9 3" />
      {rails.map((d, i) => (
        <g key={i} fill="none">
          <path d={d} stroke="#6f6f6f" strokeWidth="5" />
          <path d={d} stroke="#e8e8e8" strokeWidth="1.5" strokeDasharray="7 7" />
        </g>
      ))}
      {/* arterial roads */}
      <g fill="none">
        <path d={columbus} stroke="#a9ad55" strokeWidth="15" />
        <path d={columbus} stroke="#f7fabf" strokeWidth="13" />
        <path d={pulaski} stroke="#a5a95c" strokeWidth="18" />
        <path d={pulaski} stroke="#f7fabf" strokeWidth="16" />
        <path d="M1211,1384L1214,1408" stroke="#f7fabf" strokeWidth="9" />
        <path d={street79} stroke="#b98d4c" strokeWidth="18" />
        <path d={street79} stroke="#f6d5a5" strokeWidth="16" />
        <path d="M2120,1384L2120,1408" stroke="#f6d5a5" strokeWidth="15" />
        <path d={path(D, "M917,30L925,110")} stroke="#6f6f6f" strokeWidth="5" />
        <path
          d={path(A, "M822,0L828,500L834,1040M870,5L1320,225M40,1136L780,1118") + path(B, "M0,235L300,355M340,322L700,510L860,555M852,110L862,520")}
          stroke="#c79ad0"
          strokeWidth="1.5"
          strokeDasharray="2 3"
        />
        <path d={path(A, "M30,75C35,50 50,25 72,5M950,50C1040,110 1070,170 1073,260")} stroke="#bbb" strokeWidth="1.5" strokeDasharray="2 3" />
        <path d={path(A, "M794,0L794,25M847,0L847,25M808,1105L895,1108M820,1114L893,1114")} stroke="#444" strokeWidth="1" />
        <path d={path(D, "M930,952L950,972M950,952L930,972M765,1193L787,1215M787,1193L765,1215M942,1188L964,1210M964,1188L942,1210")} stroke="#444" strokeWidth="1.2" />
        <path d="M1905,1386L1905,1408M1956,1386L1956,1397M2087,1398L2088,1408" stroke="#9c7a3c" strokeWidth="2" />
        <path d="M1894,1384V1408" stroke="#6f6f6f" strokeWidth="6" />
      </g>
      {stops.map(([t, x, y], i) => (
        <rect key={i} x={tx(t, x) - 3} y={ty(t, y) - 3} width="6" height="6" fill="#4190d0" />
      ))}
      <rect x="683" y="1257" width="6" height="6" fill="#7b85bf" />
      {arrows.map(([t, x, y, r, c], i) => (
        <path key={i} transform={`translate(${tx(t, x)} ${ty(t, y)}) rotate(${r})`} d="M-6,0H3M1,-2.5L6,0L1,2.5z" stroke={c} fill={c} strokeWidth="1.2" />
      ))}
      {crosses.map(([t, x, y], i) => (
        <path key={i} transform={`translate(${tx(t, x)} ${ty(t, y)})`} d="M0,-7V8M-5,-2H5" stroke="#000" strokeWidth="2.5" />
      ))}
      {/* fire station, library and shops */}
      <path d="M304,511c-4,3 -6,6 -4,9l4,3c-2,-4 0,-6 2,-7c0,4 2,3 2,7l3,-3c1,-4 -1,-6 -3,-6c-1,-1 -2,-2 -4,-3z" fill="#734a08" />
      <path d="M158,754l6,2v9l-6,-2zM166,756l5,-2v9l-5,2z" fill="#734a08" stroke="#734a08" />
      <path d="M2708,701h13l-2,7h-9zM2792,701h11l-2,4h-7z" fill="#ac39ac" />
      <g textAnchor="middle" dominantBaseline="central" stroke="#ffffff" strokeOpacity="0.8" strokeWidth="2" strokeLinejoin="round" paintOrder="stroke">
        {labels.map(([t, text, x, y, r = 0, kind = "street"], i) => (
          <text
            key={i}
            transform={`translate(${tx(t, x)} ${ty(t, y)}) rotate(${r})`}
            fontSize={kind === "road" ? 10 : 9}
            fill={kind === "rail" ? "#777777" : "#222222"}
            strokeOpacity={kind === "road" ? 0.2 : 0.8}
          >
            {text}
          </text>
        ))}
        {notes.map(([t, lines, x, y, lh, fill, italic], i) => (
          <g key={i} fill={fill} fontSize={lh === 14 ? 12 : 10} fontStyle={italic ? "italic" : "normal"}>
            {lines.map((line, j) => (
              <text key={j} x={tx(t, x)} y={ty(t, y) + (j - (lines.length - 1) / 2) * lh}>
                {line}
              </text>
            ))}
          </g>
        ))}
        <text transform="translate(426 82) rotate(28)" fontSize="9" fontStyle="italic" fill="#ac39ac">
          West-Lawn
        </text>
        <text x="686" y="1274" fontSize="10" fontWeight="700" fill="#5260a8">
          Ashburn
        </text>
        <g fontSize="14" fill="#4190d0">
          <text x="143" y="446">P</text>
          <text x="2733" y="138">P</text>
          <text x="2331" y="1401">P</text>
        </g>
      </g>
    </svg>
  );
}

/* ---------- charts ---------- */

type ChartProps = {
  node: string;
  series: string;
  left: number;
  major: [string, number][];
  minor: number[];
  x0: number;
  dx: number;
  dates: string[];
  values: number[];
};

const RIGHT = 1540;

function Chart({ node, series, left, major, minor, x0, dx, dates, values }: ChartProps) {
  const xs = dates.map((_, i) => Math.round(x0 + dx * i));
  const mid = (left + RIGHT) / 2;
  return (
    <svg
      className="block h-auto w-full"
      viewBox="0 0 1762 486"
      fontFamily="'Liberation Sans', Arial, sans-serif"
      fontSize="28"
      fill="#f2f2f2"
      role="img"
      aria-label={`Last 7 days data for node: ${node}`}
    >
      <text x={mid} y="28" textAnchor="middle">
        Last 7 days data for node: {node}
      </text>
      <path d={minor.map((y) => `M${left},${y}H${RIGHT}`).join("")} stroke="#828a8c" strokeWidth="2" />
      <path d={major.map(([, y]) => `M${left},${y}H${RIGHT}`).join("")} stroke="#c0c4c5" strokeWidth="2" />
      <path d={xs.map((x) => `M${x},39V351`).join("")} stroke="#b9bec0" strokeWidth="2" />
      {major.map(([label, y]) => (
        <text key={label} x={left - 8} y={y + 10} textAnchor="end">
          {label}
        </text>
      ))}
      <polyline points={xs.map((x, i) => `${x},${values[i]}`).join(" ")} fill="none" stroke="#f08532" strokeWidth="6" strokeLinejoin="round" />
      {xs.map((x, i) => (
        <circle key={x} cx={x} cy={values[i]} r="10" fill="#f08532" />
      ))}
      {xs.map((x, i) => (
        <text key={x} transform={`translate(${x + 15} ${371}) rotate(-45)`} textAnchor="end">
          {dates[i]}
        </text>
      ))}
      <text x={mid} y="475" textAnchor="middle">
        Time
      </text>
      <text transform="translate(27 195) rotate(-90)" textAnchor="middle">
        Measurement
      </text>
      <text x="1561" y="168">
        Measurements
      </text>
      <path d="M1569,213H1618" stroke="#f08532" strokeWidth="6" />
      <circle cx="1594" cy="213" r="10" fill="#f08532" />
      <text x="1636" y="221" fontSize="22">
        {series}
      </text>
    </svg>
  );
}

/* ---------- panel controls ---------- */

function Tabs({ items, label }: { items: string[]; label: string }) {
  const [active, setActive] = useState(items[0]);
  return (
    <div role="tablist" aria-label={label} className="flex gap-1 border-b-2 border-[#dddddd] text-[20px] leading-7">
      {items.map((item) => (
        <button
          key={item}
          role="tab"
          aria-selected={item === active}
          onClick={() => setActive(item)}
          className={
            item === active
              ? "-mb-0.5 rounded-t-md border-2 border-b-0 border-[#dddddd] bg-white px-5 py-3.5 text-[#555555]"
              : "-mb-0.5 border-2 border-b-0 border-transparent px-5 py-3.5 text-[#428bca]"
          }
        >
          {item}
        </button>
      ))}
    </div>
  );
}

function SignIcon({ on }: { on: boolean }) {
  return (
    <svg viewBox="0 0 18 18" className="size-[18px]" aria-hidden="true">
      <circle cx="9" cy="9" r="9" fill="#fff" />
      {on ? (
        <path d="M4.6,8.8L8,12.2L13.4,6.8" fill="none" stroke="#335f8b" strokeWidth="2.6" />
      ) : (
        <path d="M5.6,5.6L12.4,12.4M12.4,5.6L5.6,12.4" fill="none" stroke="#4f8bb8" strokeWidth="3.2" />
      )}
    </svg>
  );
}

function PollutantRow({ items, active, onPick }: { items: string[]; active: string; onPick: (s: string) => void }) {
  return (
    <div className="grid grid-cols-4 overflow-hidden rounded">
      {items.map((item) => (
        <button
          key={item}
          aria-pressed={item === active}
          onClick={() => onPick(item)}
          className={
            item === active
              ? "flex items-center justify-center gap-[5px] border-2 border-[#2c5580] bg-[#335f8b] py-1.5 text-[20px] leading-[30px] text-white shadow-[inset_0_4px_6px_rgba(0,0,0,0.15)]"
              : "flex items-center justify-center gap-[5px] border-2 border-r-0 border-[#467fa9] bg-[#4f8bb8] py-1.5 text-[20px] leading-[30px] text-white"
          }
        >
          <SignIcon on={item === active} />
          {item}
        </button>
      ))}
    </div>
  );
}

function Panel() {
  const [pollutant, setPollutant] = useState("o3");
  return (
    <section className="relative col-start-2 mb-6 self-start rounded-b border-2 border-t-0 border-[#d9d9d9] bg-[#121f24] px-[26px] pb-[46px] pt-6">
      <label htmlFor="range" className="block text-[20px] leading-7 font-bold text-white">
        Select time range
      </label>
      <div className="relative mt-1.5">
        <select
          id="range"
          defaultValue="Last 7 days"
          className="block h-12 w-full appearance-none rounded-lg border-2 border-[#cccccc] bg-[#7378ab] px-4 text-[28px] leading-10 text-black"
        >
          <option>Last 7 days</option>
        </select>
        <svg viewBox="0 0 14 5" className="pointer-events-none absolute right-[26px] top-5 h-[5px] w-3.5" aria-hidden="true">
          <path d="M0,0H14L7,5z" fill="#333" />
        </svg>
      </div>
      <div className="mt-[26px]">
        <Tabs label="Data group" items={["Pollutants", "Measures"]} />
        <Tabs label="View" items={["Graphical", "Tabular"]} />
      </div>
      <div className="-mt-0.5">
        <Chart
          node="CHI_COM"
          series="o3 ppm"
          left={112}
          major={[["0.045", 47], ["0.040", 99], ["0.035", 151], ["0.030", 203], ["0.025", 255], ["0.020", 308]]}
          minor={[73, 125, 177, 229, 281, 334]}
          x0={277}
          dx={274.6}
          dates={["04/21/19", "04/22/19", "04/23/19", "04/24/19", "04/25/19"]}
          values={[55, 53, 248, 246, 336]}
        />
        <Chart
          node="072"
          series="o3"
          left={97}
          major={[["0.03", 89], ["0.02", 171], ["0.01", 254], ["0.00", 336]]}
          minor={[48, 130, 212, 295]}
          x0={217}
          dx={200.5}
          dates={["04/23/19", "04/24/19", "04/25/19", "04/26/19", "04/27/19", "04/28/19", "04/29/19"]}
          values={[240, 53, 303, 229, 336, 312, 299]}
        />
      </div>
      <div className="mt-1 flex flex-col gap-[22px]">
        <PollutantRow items={["co", "h2s", "no2", "o3"]} active={pollutant} onPick={setPollutant} />
        <PollutantRow items={["so2", "pm2.5", "pm10", "bc"]} active={pollutant} onPick={setPollutant} />
      </div>
    </section>
  );
}

/* ---------- map overlays ---------- */

function ZoomControl() {
  return (
    <div className="absolute left-0 top-[116px] flex flex-col rounded-r-md bg-white shadow-[0_0_0_5px_rgba(60,40,60,0.3)]">
      <button aria-label="Zoom in" className="flex h-[90px] w-[84px] items-center justify-center border-b-2 border-[#cccccc] pt-4">
        <svg viewBox="0 0 38 38" className="size-[38px]" aria-hidden="true">
          <path d="M19,0V37M0,19H38" stroke="#000" strokeWidth="7" />
        </svg>
      </button>
      <button aria-label="Zoom out" className="flex h-[90px] w-[84px] items-center justify-center pt-4">
        <svg viewBox="0 0 38 38" className="size-[38px]" aria-hidden="true">
          <path d="M0,19H38" stroke="#000" strokeWidth="7" />
        </svg>
      </button>
    </div>
  );
}

function Markers() {
  return (
    <>
      <div className="absolute left-[646px] top-[383px] size-[60px] rounded-full bg-[#387f21]/60" />
      <div className="absolute left-[674px] top-[599px] size-[60px] rounded-full bg-[#00007b]/65" />
      <div className="absolute left-[674px] top-[605px] size-[60px] rounded-full bg-[#00007b]/65" />
    </>
  );
}

function Popup() {
  return (
    <div className="absolute left-[566px] top-[242px] w-[258px] rounded-3xl bg-black/80 px-[39px] py-7 text-[24px] leading-8 text-[#f0f0f0] shadow-[0_6px_28px_rgba(0,0,0,0.4)]">
      <p className="font-bold">CHI_COM</p>
      <p>CHI_COM</p>
      <a href="#open-air-quality" className="whitespace-nowrap text-[#4a8bbd]">
        Open Air Quality
      </a>
      <button aria-label="Close popup" className="absolute right-1.5 top-1.5 flex size-3 items-center justify-center">
        <svg viewBox="0 0 10 10" className="size-2.5" aria-hidden="true">
          <path d="M1,1L9,9M9,1L1,9" stroke="#c9c9c9" strokeWidth="2.4" />
        </svg>
      </button>
      <svg viewBox="0 0 24 12" className="absolute left-[116px] top-full h-3 w-6" aria-hidden="true">
        <path d="M0,0H24L12,12z" fill="#fff" />
      </svg>
    </div>
  );
}

function LayersButton() {
  return (
    <button
      aria-label="Layers"
      className="absolute right-[54px] top-11 flex size-[88px] items-center justify-center rounded-lg bg-[#333966] shadow-[0_0_0_4px_rgba(0,0,0,0.2)]"
    >
      <svg viewBox="0 0 52 50" className="h-[50px] w-[52px]" aria-hidden="true">
        <path d="M26,50L0,33L26,17L52,33z" fill="#a9a9a9" />
        <path d="M26,45L0,28L4,26L26,40L48,26L52,28z" fill="#333966" opacity="0.5" />
        <path d="M26,42L0,25L26,9L52,25z" fill="#c9c9c9" />
        <path d="M26,37L0,19L4,17L26,33L48,17L52,19z" fill="#333966" opacity="0.5" />
        <path d="M26,34L0,17L26,0L52,17z" fill="#a2a2b8" />
        <path d="M26,32L9,20L26,8L43,20z" fill="#dedede" />
      </svg>
    </button>
  );
}

function Legend() {
  return (
    <aside className="absolute bottom-[11px] right-0.5 w-[118px] rounded-[20px] bg-black/80 px-2.5 pb-[7px] pt-1.5 text-[18px] leading-5 whitespace-nowrap text-[#cccccc]">
      <p className="font-bold">Nodes</p>
      <div className="size-[60px] rounded-full bg-[#000b78]" />
      <p>
        <a href="#aot" className="text-[#2f77ac]">AoT</a> active
      </p>
      <div className="size-[60px] rounded-full bg-[#ea3323]" />
      <p>
        <a href="#aot" className="text-[#2f77ac]">AoT</a> inactive
      </p>
      <div className="size-[60px] rounded-full bg-[#387f21]" />
      <p>
        <a href="#openaq" className="text-[#2f77ac]">OpenAQ</a>
      </p>
    </aside>
  );
}

export default function App() {
  return (
    <main className="relative grid min-h-screen grid-cols-[871fr_1818fr_139fr] overflow-hidden bg-[#f2efe9] font-['Liberation_Sans',Arial,sans-serif]">
      <StreetMap />
      <Markers />
      <Popup />
      <Panel />
      <ZoomControl />
      <LayersButton />
      <Legend />
    </main>
  );
}
